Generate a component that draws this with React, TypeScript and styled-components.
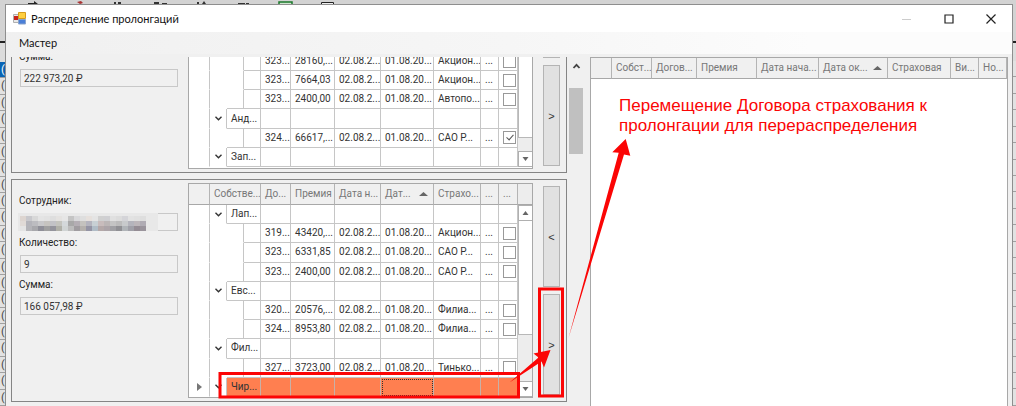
import React, { useId } from 'react';
import styled, { createGlobalStyle, css } from 'styled-components';

const line = '#c6c6c6';
const face = '#f0f0f0';
const red = '#fb0505';

const GlobalStyle = createGlobalStyle`
  *, *::before, *::after { box-sizing: border-box; }
  body { margin: 0; background: #d6d6d6; font-family: Roboto, "Liberation Sans", sans-serif; font-size: 10px; color: #333; }
  button, input { font: inherit; color: inherit; }
`;

const Desktop = styled.div`
  position: relative;
  display: flex;
  flex-direction: column;
  height: 100vh;
  overflow: hidden;
`;

const ToolStrip = styled.div`
  flex: 0 0 4px;
  overflow: hidden;
  background: #d3d3d3;
  svg { display: block; }
`;

const Stage = styled.div`
  flex: 1;
  min-height: 0;
  display: flex;
`;

const EdgeRows = styled.div<{ $side: 'left' | 'right' }>`
  flex: 0 0 ${p => (p.$side === 'left' ? 5 : 3)}px;
  padding-top: ${p => (p.$side === 'left' ? 58 : 57)}px;
  display: flex;
  flex-direction: column;
  overflow: hidden;
  background: linear-gradient(#d3d3d3 0 37px, #222 37px 39px, #dcdcdc 39px);
`;

const EdgeRow = styled.div<{ $selected?: boolean }>`
  flex: 1;
  min-height: 0;
  padding-left: 1px;
  border-bottom: 1px solid #a0a0a0;
  background: ${p => (p.$selected ? '#0a64b4' : '#e2e2e2')};
  color: ${p => (p.$selected ? '#fff' : '#444')};
  font-size: 11px;
  line-height: 15px;
`;

const Window = styled.main`
  flex: 1;
  min-width: 0;
  display: flex;
  flex-direction: column;
  border: 1px solid #8e8e8e;
  border-bottom: 0;
  background: ${face};
`;

const TitleBar = styled.header`
  flex: 0 0 27px;
  display: flex;
  align-items: center;
  padding-left: 7px;
  background: #fff;
`;

const Title = styled.h1`
  flex: 1;
  margin: 0 0 0 5px;
  font: 400 11px/16px Lato, "Open Sans", sans-serif;
  color: #111;
`;

const CaptionButton = styled.button`
  width: 42px;
  height: 26px;
  padding: 0;
  display: grid;
  place-items: center;
  border: 0;
  background: none;
`;

const MenuBar = styled.nav`
  flex: 0 0 22px;
  padding-left: 13px;
  background: linear-gradient(90deg, #f0f0f0, #f6f6f6 50%, #fcfcfc 80%);
`;

const MenuItem = styled.button`
  height: 22px;
  padding: 0;
  border: 0;
  background: none;
  font: 400 11px/20px Lato, "Open Sans", sans-serif;
  color: #111;
`;

const Content = styled.div`
  flex: 1;
  min-height: 0;
  margin-top: 3px;
  display: flex;
  gap: 7px;
  padding-right: 4px;
`;

const LeftPane = styled.section`
  flex: 0 0 577px;
  display: flex;
  justify-content: space-between;
  overflow: hidden;
  padding-left: 5px;
`;

const Panels = styled.div`
  width: 556px;
  display: flex;
  flex-direction: column;
  gap: 6px;
`;

const Panel = styled.article<{ $cut?: boolean }>`
  flex: none;
  display: grid;
  grid-template-columns: 166px 345px 17px;
  column-gap: 10px;
  padding: 3px 0;
  border: 1px solid #858585;
  ${p => p.$cut && css`
    margin-top: -7px;
    border-top: 0;
    padding-top: 0;
  `}
`;

const Fields = styled.div<{ $cut?: boolean }>`
  display: flex;
  flex-direction: column;
  gap: 5px;
  padding: ${p => (p.$cut ? 0 : 11)}px 0 0 7px;
`;

const FieldBox = styled.div`
  display: flex;
  flex-direction: column;
  gap: 5px;
`;

const Label = styled.label`
  line-height: 14px;
  color: #222;
`;

const InputLine = styled.div`
  position: relative;
  margin-left: 1px;
  height: 18px;
`;

const TextInput = styled.input`
  display: block;
  width: 100%;
  height: 18px;
  padding: 0 3px;
  border: 1px solid #c8c8c8;
  border-radius: 0;
  background: ${face};
  outline: 0;
`;

const Mosaic = styled.svg`
  position: absolute;
  left: -2px;
  top: 0;
`;

const GridFrame = styled.div<{ $cut?: boolean; $fill?: boolean }>`
  display: flex;
  align-items: flex-start;
  border: 1px solid #a8a8a8;
  background: #fff;
  overflow: hidden;
  ${p => p.$cut && css`
    padding: 2px 0 1px;
    border-top: 0;
  `}
  ${p => p.$fill && css`
    flex: 1;
    min-width: 0;
    border-bottom: 0;
  `}
`;

const Table = styled.table<{ $height?: number }>`
  flex: 1;
  min-width: 0;
  width: 100%;
  height: ${p => (p.$height ? `${p.$height}px` : 'auto')};
  table-layout: fixed;
  border-collapse: separate;
  border-spacing: 0;
`;

const Col = styled.col<{ $w: number }>`
  width: ${p => p.$w}px;
`;

const Th = styled.th`
  height: 21px;
  padding: 0 0 0 4px;
  border-right: 1px solid #b4b4b4;
  border-bottom: 1px solid #a8a8a8;
  background: ${face};
  color: #777;
  font-weight: 400;
  line-height: 18px;
  text-align: left;
  white-space: nowrap;
  overflow: hidden;
`;

const SortLabel = styled.span`
  display: flex;
  align-items: center;
  justify-content: space-between;
  padding-right: 5px;
`;

const Td = styled.td<{ $bare?: boolean; $right?: boolean; $hot?: boolean; $focus?: boolean }>`
  padding: 0 0 0 4px;
  border-right: 1px solid ${line};
  border-bottom: 1px solid ${line};
  line-height: 16px;
  white-space: nowrap;
  overflow: hidden;
  ${p => p.$bare && css`
    padding: 0;
    border-bottom-color: transparent;
    text-align: center;
  `}
  ${p => p.$bare && !p.$right && css`border-right-color: transparent;`}
  ${p => p.$hot && css`
    background: #ff7f50;
    border-color: #c8b0a8;
  `}
  ${p => p.$focus && css`
    outline: 1px dotted #333;
    outline-offset: -2px;
  `}
`;

const Glyph = styled.svg`
  display: block;
  margin: 0 auto;
`;

const Check = styled.input`
  appearance: none;
  display: grid;
  place-items: center;
  width: 13px;
  height: 13px;
  margin: 0;
  border: 1px solid #999;
  background: #fff;
  &:checked::after {
    content: '';
    width: 4px;
    height: 7px;
    margin-top: -2px;
    border: solid #555;
    border-width: 0 1px 1px 0;
    transform: rotate(42deg);
  }
`;

const ScrollColumn = styled.div`
  flex: 0 0 15px;
  align-self: stretch;
  display: flex;
  flex-direction: column;
  background: #ededed;
`;

const ScrollCap = styled.div`
  height: 21px;
  border-bottom: 1px solid #a8a8a8;
`;

const ScrollButton = styled.button`
  height: 16px;
  padding: 0;
  display: grid;
  place-items: center;
  border: 1px solid #b0b0b0;
  background: #fff;
`;

const ScrollThumb = styled.div<{ $height: number }>`
  height: ${p => p.$height}px;
  margin-bottom: auto;
  border: 1px solid #b8b8b8;
  border-top: 0;
  background: #fff;
`;

const Movers = styled.div<{ $cut?: boolean }>`
  display: flex;
  flex-direction: column;
  gap: 7px;
  padding: ${p => (p.$cut ? 0 : 3)}px 0 3px;
`;

const MoveButton = styled.button<{ $stub?: boolean }>`
  height: ${p => (p.$stub ? 8 : 101)}px;
  padding: 0;
  border: 1px solid #b4b4b4;
  background: #e1e1e1;
  font: 400 11px/14px "Liberation Sans", sans-serif;
`;

const PaneScroll = styled.div`
  width: 14px;
  display: flex;
  flex-direction: column;
  background: #f0f0f0;
`;

const PaneArrow = styled.button`
  height: 17px;
  padding: 0;
  display: grid;
  place-items: center;
  border: 0;
  background: none;
`;

const PaneThumb = styled.div`
  height: 66px;
  margin-top: 14px;
  background: #c0c0c0;
`;

const RightPane = styled.section`
  flex: 1;
  min-width: 0;
  display: flex;
`;

const RightBody = styled.div`
  flex: 1;
  min-width: 0;
`;

const Note = styled.p`
  margin: 0;
  padding: 17px 0 0 28px;
  color: ${red};
  font: 400 17px/20px "Liberation Sans", Arial, sans-serif;
`;

const Annotations = styled.svg`
  position: absolute;
  left: 0;
  top: 0;
  pointer-events: none;
`;

const Chevron = () => (
  <Glyph width="9" height="7" viewBox="0 0 9 7">
    <path d="M1.5 1.8 4.5 4.8 7.5 1.8" fill="none" stroke="#333" strokeWidth="1.4" />
  </Glyph>
);

const SortArrow = () => (
  <svg width="9" height="6" viewBox="0 0 9 6">
    <path d="M0 5 4.5 1 9 5z" fill="#666" />
  </svg>
);

const SmallArrow = ({ up }: { up?: boolean }) => (
  <svg width="7" height="4" viewBox="0 0 7 4">
    <path d={up ? 'M.5 4 3.5 0 6.5 4z' : 'M.5 0 3.5 4 6.5 0z'} fill="#666" />
  </svg>
);

type DataRow = { cells: string[]; checked?: boolean };
type Group = { name: string; rows: DataRow[]; current?: boolean };

const row = (no: string, sum: string, company: string, checked = false): DataRow => ({
  cells: [no, sum, '02.08.2...', '01.08.20...', company, '...'],
  checked,
});

const firstGroups: Group[] = [
  { name: '', rows: [row('323...', '28160,...', 'Акцион...'), row('323...', '7664,03', 'Акцион...'), row('323...', '2400,00', 'Автопо...')] },
  { name: 'Анд...', rows: [row('324...', '66617,...', 'САО Р...', true)] },
  { name: 'Зап...', rows: [] },
];

const secondGroups: Group[] = [
  { name: 'Лап...', rows: [row('319...', '43420,...', 'Акцион...'), row('323...', '6331,85', 'САО Р...'), row('323...', '2400,00', 'САО Р...')] },
  { name: 'Евс...', rows: [row('320...', '20576,...', 'Филиа...'), row('324...', '8953,80', 'Филиа...')] },
  { name: 'Фил...', rows: [row('327...', '3723,00', 'Тинько...')] },
  { name: 'Чир...', rows: [], current: true },
];

const treeColumns = [21, 17, 17, 17, 30, 44, 46, 53, 47, 18, 19];

function TreeTable({ groups, header, height }: { groups: Group[]; header?: boolean; height: number }) {
  return (
    <Table $height={height}>
      <colgroup>{treeColumns.map((w, i) => <Col key={i} $w={w} />)}</colgroup>
      {header && (
        <thead>
          <tr>
            <Th />
            <Th colSpan={3}>Собстве...</Th>
            <Th>До...</Th>
            <Th>Премия</Th>
            <Th>Дата н...</Th>
            <Th><SortLabel>Дат...<SortArrow /></SortLabel></Th>
            <Th>Страхо...</Th>
            <Th>...</Th>
            <Th>...</Th>
          </tr>
        </thead>
      )}
      <tbody>
        {groups.map((g, gi) => (
          <React.Fragment key={gi}>
            {g.name && (
              <tr>
                <Td $bare $right>
                  {g.current && (
                    <Glyph width="5" height="8" viewBox="0 0 5 8"><path d="M0 0 5 4 0 8z" fill="#777" /></Glyph>
                  )}
                </Td>
                <Td $bare $right><Chevron /></Td>
                <Td colSpan={2} $hot={g.current}>{g.name}</Td>
                {treeColumns.slice(4).map((_, i) => (
                  <Td key={i} $hot={g.current} $focus={g.current && i === 3} />
                ))}
              </tr>
            )}
            {g.rows.map((r, ri) => (
              <tr key={ri}>
                <Td $bare $right />
                <Td $bare />
                {ri === g.rows.length - 1 ? <Td /> : <Td $bare $right />}
                <Td />
                {r.cells.map((c, i) => <Td key={i}>{c}</Td>)}
                <Td><Check type="checkbox" aria-label={r.cells[0]} defaultChecked={r.checked} /></Td>
              </tr>
            ))}
          </React.Fragment>
        ))}
      </tbody>
    </Table>
  );
}

const mosaic = [
  ['#ddd5d0', '#c8c8cc', '#d8d8d8', '#e4e4e4', '#e2e2e2', '#dedede', '#e4e2e0', '#e6e6e6', '#c4c4c4', '#d8d8da', '#dedede', '#e6e0dc', '#e4e4e4', '#d0d0d0', '#cfcfd2', '#e0e0e0', '#dcdcdc', '#d4d4d8', '#e2e2e2', '#e0e0e0', '#dedede'],
  ['#e0dad6', '#b4b4ba', '#bcbcc0', '#c8c8ca', '#c6c4c0', '#c2c2c6', '#c4c4be', '#d4d8da', '#a8a8a8', '#b4aeb4', '#c4c2be', '#b4b4be', '#c8d0d4', '#c8bcbc', '#bcb6b6', '#c4c4c4', '#bcbcbc', '#c8cacc', '#b4b4bc', '#bcb6ba', '#b0acb4'],
  ['#e4e4e4', '#b4b4b8', '#a8a8ac', '#8f8f98', '#a0a0a0', '#94949c', '#b0b0a8', '#d0d4d4', '#bcbcbc', '#a09ca0', '#b4b0ac', '#9494a4', '#b0bcc6', '#b4a8a8', '#aca4a8', '#a0a0a4', '#909094', '#b0b4b8', '#a0a0a8', '#948c94', '#9a949c'],
];

function Field({ label, value, hidden }: { label: string; value: string; hidden?: boolean }) {
  const id = useId();
  return (
    <FieldBox>
      <Label htmlFor={id}>{label}</Label>
      <InputLine>
        <TextInput id={id} readOnly defaultValue={value} />
        {hidden && (
          <Mosaic width="140" height="18" viewBox="0 0 140 18">
            <rect width="140" height="18" fill="#e8e8e8" />
            {mosaic.map((cols, y) => cols.map((c, x) => (
              <rect key={`${x}-${y}`} x={2 + x * 6} y={3 + y * 5} width="6" height="5" fill={c} />
            )))}
          </Mosaic>
        )}
      </InputLine>
    </FieldBox>
  );
}

const rightColumns: [string, number][] = [
  ['', 21], ['Собст...', 40], ['Догов...', 45], ['Премия', 60], ['Дата нача...', 62],
  ['Дата ок...', 69], ['Страховая', 63], ['Ви...', 28], ['Но...', 28],
];

export default function App() {
  return (
    <Desktop>
      <GlobalStyle />
      <ToolStrip>
        <svg width="340" height="4" viewBox="0 0 340 4">
          <path d="M28 4h10l-4-3v2h-6z" fill="#222" />
          <path d="M77 2l4-1 2 2-3 1z" fill="#a33" />
          <path d="M114 2h2v2h-2zM118 2h3v2h-3zM154 2h5v2h-5zM162 3h5v1h-5zM197 2h2v2h-2zM202 4l2-3 2 3zM238 3h7v1h-7zM246 3h3v1h-3z" fill="#333" />
          <path d="M279 4V2h13v2" fill="#cfe6cf" stroke="#1c7a2c" strokeWidth="1.5" />
          <path d="M321.500 4V2.500h12V4" fill="#eee" stroke="#222" />
        </svg>
      </ToolStrip>
      <Stage>
        <EdgeRows $side="left">
          {Array.from({ length: 21 }, (_, i) => <EdgeRow key={i} $selected={i === 0}>(</EdgeRow>)}
        </EdgeRows>
        <Window>
          <TitleBar>
            <svg width="13" height="13" viewBox="0 0 13 13">
              <path d="M.5 2.500h5v8h-5z" fill="#e8e8e8" stroke="#b0b0b0" />
              <path d="M1 4h4v4H1z" fill="#c8231c" />
              <path d="M5.500.5h7v6h-7z" fill="#ffcf3f" stroke="#d69b1c" />
              <path d="M5.500 7.500h7v4.500h-7z" fill="#4a7fd8" stroke="#8aa4cc" />
            </svg>
            <Title>Распределение пролонгаций</Title>
            <CaptionButton aria-label="Свернуть">
              <svg width="10" height="10"><path d="M0 5.500h9" stroke="#ccc" /></svg>
            </CaptionButton>
            <CaptionButton aria-label="Развернуть">
              <svg width="10" height="10"><path d="M1 1h8v8H1z" fill="none" stroke="#222" strokeWidth="1.2" /></svg>
            </CaptionButton>
            <CaptionButton aria-label="Закрыть">
              <svg width="10" height="10"><path d="M.5.5l9 9M9.500.5l-9 9" stroke="#222" strokeWidth="1.2" /></svg>
            </CaptionButton>
          </TitleBar>
          <MenuBar><MenuItem>Мастер</MenuItem></MenuBar>
          <Content>
            <LeftPane>
              <Panels>
                <Panel $cut>
                  <Fields $cut><Field label="Сумма:" value="222 973,20 ₽" /></Fields>
                  <GridFrame $cut>
                    <TreeTable groups={firstGroups} height={115} />
                    <ScrollColumn>
                      <ScrollThumb $height={86} />
                      <ScrollButton aria-label="Вниз"><SmallArrow /></ScrollButton>
                    </ScrollColumn>
                  </GridFrame>
                  <Movers $cut>
                    <MoveButton $stub aria-label="Вернуть" />
                    <MoveButton>&gt;</MoveButton>
                  </Movers>
                </Panel>
                <Panel>
                  <Fields>
                    <Field label="Сотрудник:" value="" hidden />
                    <Field label="Количество:" value="9" />
                    <Field label="Сумма:" value="166 057,98 ₽" />
                  </Fields>
                  <GridFrame>
                    <TreeTable groups={secondGroups} header height={213} />
                    <ScrollColumn>
                      <ScrollCap />
                      <ScrollButton aria-label="Вверх"><SmallArrow up /></ScrollButton>
                      <ScrollThumb $height={114} />
                      <ScrollButton aria-label="Вниз"><SmallArrow /></ScrollButton>
                    </ScrollColumn>
                  </GridFrame>
                  <Movers>
                    <MoveButton>&lt;</MoveButton>
                    <MoveButton>&gt;</MoveButton>
                  </Movers>
                </Panel>
              </Panels>
              <PaneScroll>
                <PaneArrow aria-label="Прокрутить вверх">
                  <svg width="9" height="6" viewBox="0 0 9 6"><path d="M1.500 5 4.500 1.800 7.500 5" fill="none" stroke="#444" strokeWidth="1.800" /></svg>
                </PaneArrow>
                <PaneThumb />
              </PaneScroll>
            </LeftPane>
            <RightPane>
              <GridFrame $fill>
                <RightBody>
                  <Table>
                    <colgroup>{rightColumns.map(([, w], i) => <Col key={i} $w={w} />)}</colgroup>
                    <thead>
                      <tr>
                        {rightColumns.map(([name], i) => (
                          <Th key={i}>{i === 5 ? <SortLabel>{name}<SortArrow /></SortLabel> : name}</Th>
                        ))}
                      </tr>
                    </thead>
                  </Table>
                  <Note>Перемещение Договора страхования к<br />пролонгации для перераспределения</Note>
                </RightBody>
              </GridFrame>
            </RightPane>
          </Content>
        </Window>
        <EdgeRows $side="right">
          {Array.from({ length: 21 }, (_, i) => <EdgeRow key={i} />)}
        </EdgeRows>
      </Stage>
      <Annotations width="640" height="406" viewBox="0 0 640 406">
        <g fill="none" stroke={red} strokeWidth="3">
          <path d="M220 373.500h298.500v23.500H220z" />
          <path d="M539.500 289h23v107h-23z" />
        </g>
        <g fill={red}>
          <path d="M509.500 382.500 538.500 357.500 533.500 353.500 550.500 350 544 367.500 541.500 361.500z" />
          <path d="M568.500 338 618.700 152.700 612.300 152.300 625.700 139 630.300 155.700 624 154.500z" />
        </g>
      </Annotations>
    </Desktop>
  );
}
